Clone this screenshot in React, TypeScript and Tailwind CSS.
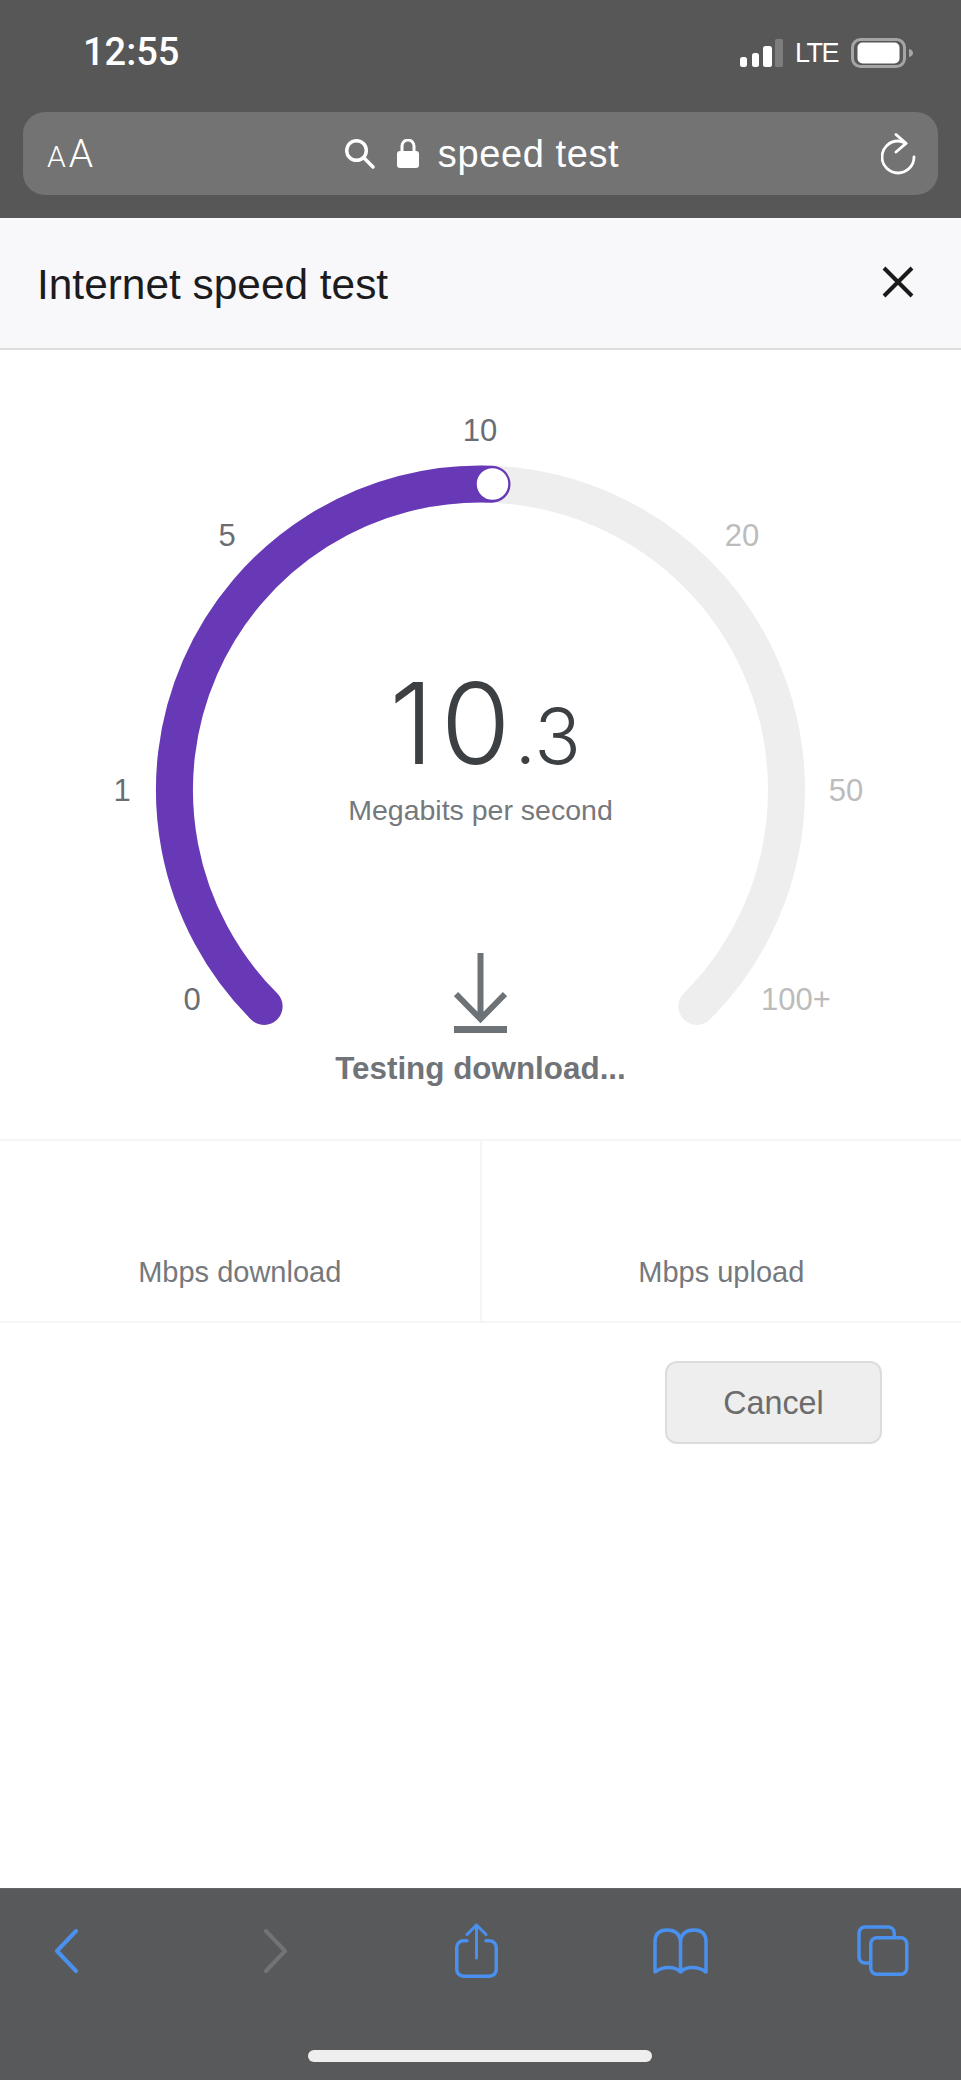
const ticks = [
  { label: "10", x: 480, y: 430, on: true },
  { label: "5", x: 227, y: 535, on: true },
  { label: "20", x: 742, y: 535, on: false },
  { label: "1", x: 122, y: 790, on: true },
  { label: "50", x: 846, y: 790, on: false },
  { label: "0", x: 192, y: 999, on: true },
  { label: "100+", x: 796, y: 999, on: false },
];

function Gauge() {
  return (
    <>
      <svg className="absolute left-0 top-0" width="961" height="1139" viewBox="0 0 961 1139" fill="none">
        <path d="M264.1 1006.4 A306 306 0 1 1 696.9 1006.4" stroke="#eeeeee" strokeWidth="37" strokeLinecap="round" />
        <path d="M264.1 1006.4 A306 306 0 0 1 492 484.2" stroke="#6739b6" strokeWidth="37" strokeLinecap="round" />
        <circle cx="492.5" cy="484" r="16.5" fill="#ffffff" stroke="#6739b6" strokeWidth="1.5" />
      </svg>
      {ticks.map((t) => (
        <span
          key={t.label}
          className={`absolute -translate-x-1/2 -translate-y-1/2 text-[31px] leading-none ${t.on ? "text-[#6a6e73]" : "text-[#bcbcbc]"}`}
          style={{ left: t.x, top: t.y }}
        >
          {t.label}
        </span>
      ))}
    </>
  );
}

export default function App() {
  return (
    <div className="relative flex h-[2080px] w-[961px] flex-col overflow-hidden bg-white font-['Liberation_Sans',Arial,sans-serif]">
      <header className="flex h-[218px] flex-col bg-[#575757] text-white">
        <div className="flex h-[112px] items-start justify-between pl-[83px] pr-[48px] pt-[32px]">
          <span className="text-[38px] font-medium leading-[40px] font-['Roboto',sans-serif]">12:55</span>
          <div className="flex items-center pt-[6px]">
            <svg width="43" height="28" viewBox="0 0 43 28" fill="#fff">
              <rect x="0" y="18" width="7" height="10" rx="2.5" />
              <rect x="12" y="14" width="7" height="14" rx="2.5" />
              <rect x="23" y="7" width="9" height="21" rx="2.5" />
              <rect x="35" y="0" width="8" height="28" rx="1.5" fill="#7d7d7d" />
            </svg>
            <span className="ml-[12px] text-[27px] leading-none tracking-[-1.5px]">LTE</span>
            <svg width="62" height="30" viewBox="0 0 62 30" fill="none" className="ml-[13px]">
              <rect x="1.5" y="1.5" width="52" height="27" rx="8" stroke="#a5a5a5" strokeWidth="3" />
              <rect x="6.5" y="4.5" width="42" height="21" rx="5" fill="#fff" />
              <path d="M58 11c2.5.6 4 2 4 4s-1.5 3.4-4 4z" fill="#a5a5a5" />
            </svg>
          </div>
        </div>
        <div className="mx-[23px] grid h-[83px] grid-cols-[1fr_auto_1fr] items-center rounded-[22px] bg-[#737373] pl-[24px] pr-[21px]">
          <span className="mt-[2px] flex items-baseline font-['Roboto',sans-serif] font-light leading-none">
            <span className="text-[30px]">A</span>
            <span className="ml-[3px] text-[39px]">A</span>
          </span>
          <div className="flex items-center">
            <svg width="30" height="30" viewBox="0 0 30 30" fill="none" stroke="#fff" strokeWidth="3.5">
              <circle cx="11.5" cy="11.5" r="9.8" />
              <path d="M19 19l9 9" strokeLinecap="round" />
            </svg>
            <svg width="22" height="29" viewBox="0 0 22 29" fill="none" className="ml-[22px]">
              <path d="M5 14V7a6 6 0 0 1 12 0v7" stroke="#fff" strokeWidth="3" />
              <rect x="0" y="12" width="22" height="17" rx="3" fill="#fff" />
            </svg>
            <span className="ml-[19px] text-[38px] leading-none tracking-[0.6px]">speed test</span>
          </div>
          <svg width="36" height="42" viewBox="0 0 36 42" fill="none" stroke="#fff" strokeWidth="2.8" strokeLinecap="round" strokeLinejoin="round" className="justify-self-end">
            <path d="M25 10.4C22 9 19.5 8 17 8A16 16 0 1 0 33 24" />
            <path d="M15 1.5l10 8.9L15 19" />
          </svg>
        </div>
      </header>

      <div className="flex h-[132px] items-center justify-between border-b-2 border-[#dedede] bg-[#f8f8fa] pl-[37px] pr-[47px]">
        <h1 className="mt-[5px] text-[42.4px] font-normal leading-none text-[#1c1c1e]">Internet speed test</h1>
        <svg width="32" height="32" viewBox="0 0 32 32" stroke="#1a1a1a" strokeWidth="4" className="mb-[3px]">
          <path d="M2 2l28 28M30 2L2 30" />
        </svg>
      </div>

      <main className="flex flex-1 flex-col">
        <div className="flex h-[789px] flex-col items-center">
          <div className="ml-[9px] mt-[317px] flex items-baseline font-['Inter',sans-serif] font-light leading-none text-[#3d4043]">
            <span className="text-[113px] tracking-[7px]">10</span>
            <span className="-ml-[3px] text-[77px]">.3</span>
          </div>
          <div className="mt-[16px] text-[28.5px] leading-none text-[#75787c]">Megabits per second</div>
          <svg className="mt-[128px]" width="53" height="80" viewBox="0 0 53 80" fill="none" stroke="#6d7276" strokeWidth="6">
            <path d="M26.5 0v66M2 41l24.5 25L51 41" />
            <path d="M0 76.5h53" strokeWidth="7" />
          </svg>
          <div className="mt-[20px] text-[31.4px] font-bold leading-none text-[#707478]">Testing download...</div>
        </div>

        <div className="flex h-[184px] border-y-2 border-[#f5f5f5]">
          <div className="flex flex-1 items-end justify-center border-r-2 border-[#f5f5f5] pb-[34px] text-[29px] leading-none text-[#75787c]">Mbps download</div>
          <div className="flex flex-1 items-end justify-center pb-[34px] text-[29px] leading-none text-[#75787c]">Mbps upload</div>
        </div>

        <div className="flex justify-end pr-[79px] pt-[38px]">
          <button className="flex h-[83px] w-[217px] items-center justify-center rounded-[12px] border-2 border-[#dcdcdc] bg-[#eeeeee] pt-[2px] text-[32.3px] text-[#6c6c6c]">Cancel</button>
        </div>
      </main>

      <nav className="relative h-[192px] border-t border-[#666] bg-[#58595b]">
        <div className="flex items-center pl-[55px] pt-[34px]">
          <svg width="23" height="44" viewBox="0 0 23 44" fill="none" stroke="#4a90ee" strokeWidth="4" strokeLinecap="round" strokeLinejoin="round">
            <path d="M21 2L2 22l19 20" />
          </svg>
          <svg width="23" height="44" viewBox="0 0 23 44" fill="none" stroke="#737373" strokeWidth="4" strokeLinecap="round" strokeLinejoin="round" className="ml-[186px]">
            <path d="M2 2l19 20L2 42" />
          </svg>
          <svg width="43" height="55" viewBox="0 0 43 55" fill="none" stroke="#4a90ee" strokeWidth="3.5" strokeLinecap="round" strokeLinejoin="round" className="ml-[168px]">
            <path d="M12 17.75H8.5a6.75 6.75 0 0 0-6.75 6.75v22a6.75 6.75 0 0 0 6.75 6.75h26a6.75 6.75 0 0 0 6.75-6.75v-22a6.75 6.75 0 0 0-6.75-6.75H31" />
            <path d="M21.5 35V2M12 11.5l9.5-9.500 9.500 9.500" strokeWidth="3" />
          </svg>
          <svg width="55" height="46" viewBox="0 0 55 46" fill="none" stroke="#4a90ee" strokeWidth="3.5" strokeLinejoin="round" strokeLinecap="round" className="ml-[155px]">
            <path d="M27.5 14C27 6 22 2 14 2 6 2 2 6 2 14v30c8-6 20-6 25.5 0 5.5-6 17.5-6 25.5 0V14c0-8-4-12-12-12-8 0-13 4-13.5 12v30" />
          </svg>
          <svg width="52" height="52" viewBox="0 0 52 52" fill="none" stroke="#4a90ee" strokeWidth="3.5" className="ml-[149px]">
            <path d="M37.25 11V8a6 6 0 0 0-6-6H8a6 6 0 0 0-6 6v24a6 6 0 0 0 6 6h4" />
            <rect x="13.75" y="12.75" width="36" height="36.5" rx="6" />
          </svg>
        </div>
        <div className="absolute bottom-[18px] left-[308px] h-[12px] w-[344px] rounded-full bg-[#eeeeee]" />
      </nav>

      <Gauge />
    </div>
  );
}
